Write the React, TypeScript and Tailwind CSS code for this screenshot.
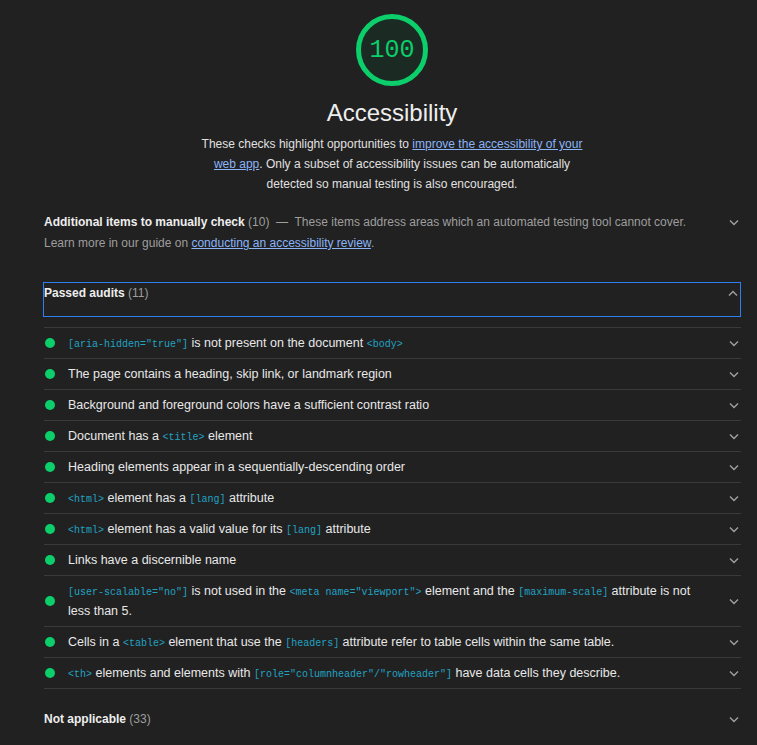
import React from "react";

const Code = ({ children }: { children: React.ReactNode }) => (
  <code className="text-[10px] leading-none text-[#22a3c3] [font-family:'Liberation_Mono','DejaVu_Sans_Mono',monospace]">{children}</code>
);

const Chevron = ({ up = false }: { up?: boolean }) => (
  <svg width="14" height="14" viewBox="0 0 14 14" className="shrink-0">
    <path
      d={up ? "M3 8.5 L7 4.5 L11 8.5" : "M3 5.5 L7 9.5 L11 5.5"}
      fill="none"
      stroke="#a0a0a0"
      strokeWidth="1.4"
    />
  </svg>
);

const rows: React.ReactNode[] = [
  <>
    <Code>[aria-hidden="true"]</Code> is not present on the document <Code>&lt;body&gt;</Code>
  </>,
  <>The page contains a heading, skip link, or landmark region</>,
  <>Background and foreground colors have a sufficient contrast ratio</>,
  <>
    Document has a <Code>&lt;title&gt;</Code> element
  </>,
  <>Heading elements appear in a sequentially-descending order</>,
  <>
    <Code>&lt;html&gt;</Code> element has a <Code>[lang]</Code> attribute
  </>,
  <>
    <Code>&lt;html&gt;</Code> element has a valid value for its <Code>[lang]</Code> attribute
  </>,
  <>Links have a discernible name</>,
  <>
    <Code>[user-scalable="no"]</Code> is not used in the <Code>&lt;meta name="viewport"&gt;</Code> element and the{" "}
    <Code>[maximum-scale]</Code> attribute is not less than 5.
  </>,
  <>
    Cells in a <Code>&lt;table&gt;</Code> element that use the <Code>[headers]</Code> attribute refer to table cells within the same table.
  </>,
  <>
    <Code>&lt;th&gt;</Code> elements and elements with <Code>[role="columnheader"/"rowheader"]</Code> have data cells they describe.
  </>,
];

export default function App() {
  return (
    <div className="min-h-[745px] bg-[#212121] text-[#e8e8e8] [font-family:'Liberation_Sans',Arial,sans-serif] pb-[20px] pl-[43px] pr-[16px]">
      <div className="flex flex-col items-center pt-[14px]">
        <div className="w-[72px] h-[72px] rounded-full border-[5px] border-[#0cce6b] bg-[#1b2b23] flex items-center justify-center">
          <span className="text-[25px] leading-none text-[#0cce6b] [font-family:'Liberation_Mono','DejaVu_Sans_Mono',monospace]">100</span>
        </div>
        <div className="mt-[13px] text-[24px] leading-[28px] text-[#eeeeee]">Accessibility</div>
        <p className="mt-[7px] w-[400px] text-center text-[12px] leading-[20px] text-[#e0e0e0]">
          These checks highlight opportunities to{" "}
          <a className="text-[#8ab4f8] underline">improve the accessibility of your web app</a>. Only a subset of
          accessibility issues can be automatically detected so manual testing is also encouraged.
        </p>
      </div>

      <div>
        <div className="mt-[18px] flex items-start">
          <div className="flex-1 text-[12px] leading-[20px] pl-px">
            <span className="font-bold text-[#eeeeee]">Additional items to manually check</span>{" "}
            <span className="text-[#9e9e9e]">(10)</span>
            <span className="text-[#9e9e9e]">
              {"  "}&nbsp;—&nbsp; These items address areas which an automated testing tool cannot cover.
            </span>
            <div className="text-[#9e9e9e] leading-[22px]">
              Learn more in our guide on{" "}
              <a className="text-[#8ab4f8] underline">conducting an accessibility review</a>.
            </div>
          </div>
          <div className="mt-[3px]">
            <Chevron />
          </div>
        </div>

        <div className="mt-[28px] h-[35px] border border-[#2f7ff0] flex items-start">
          <div className="flex-1 text-[12px] leading-[20px]">
            <span className="font-bold text-[#eeeeee]">Passed audits</span>{" "}
            <span className="text-[#9e9e9e]">(11)</span>
          </div>
          <div className="mt-[4px]">
            <Chevron up />
          </div>
        </div>

        <div className="mt-[10px] ml-px border-b border-[#3a3a3a]">
          {rows.map((r, i) => (
            <div key={i} className="flex items-center border-t border-[#3a3a3a] py-[5px]">
              <div className="w-[10px] h-[10px] rounded-full bg-[#0cce6b] ml-px shrink-0" />
              <div className="flex-1 pl-[13px] pr-[30px] text-[12.5px] leading-[20px] text-[#e8e8e8]">{r}</div>
              <Chevron />
            </div>
          ))}
        </div>

        <div className="mt-[20px] flex items-center">
          <div className="flex-1 text-[12px] leading-[20px] pl-px">
            <span className="font-bold text-[#eeeeee]">Not applicable</span>{" "}
            <span className="text-[#9e9e9e]">(33)</span>
          </div>
          <Chevron />
        </div>
      </div>
    </div>
  );
}
